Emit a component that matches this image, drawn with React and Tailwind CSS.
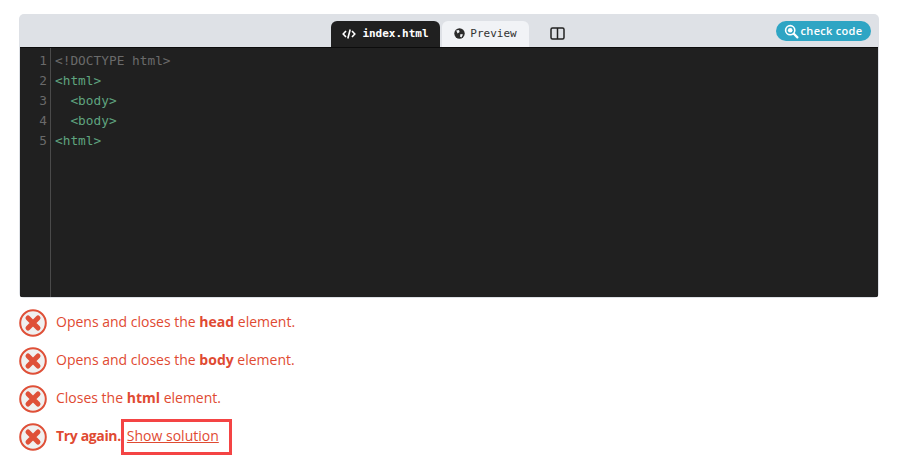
import React from 'react';

const lines = [
  { text: '<!DOCTYPE html>', color: 'text-[#6a6a6a]' },
  { text: '<html>', color: 'text-[#5fa37f]' },
  { text: '  <body>', color: 'text-[#5fa37f]' },
  { text: '  <body>', color: 'text-[#5fa37f]' },
  { text: '<html>', color: 'text-[#5fa37f]' },
];

const FailIcon = () => (
  <svg width="28" height="28" viewBox="0 0 28 28" className="shrink-0">
    <circle cx="14" cy="14" r="12.8" fill="#f0f0f0" stroke="#df5038" strokeWidth="2" />
    <path d="M9 9 L19 19 M19 9 L9 19" stroke="#df5038" strokeWidth="5" strokeLinecap="round" />
  </svg>
);

const Result = ({ children }) => (
  <div className="flex h-[28px] items-center gap-[9px] text-[14px] leading-[20px] text-[#df4a32]">
    <FailIcon />
    <div className="mb-[2px] flex items-center">{children}</div>
  </div>
);

const App = () => {
  return (
    <div className="h-[462px] w-[901px] overflow-hidden bg-white pl-[19px] pt-[14px] font-['Open_Sans',sans-serif]">
      <div className="w-[860px] overflow-hidden rounded-[5px] bg-[#dee1e6] px-[1px] pb-[1px]">
        <div className="relative flex h-[33px] items-end pl-[311px]">
          <div className="flex h-[26px] w-[109px] items-center justify-center gap-[6px] rounded-t-[6px] bg-[#202020] font-['DejaVu_Sans_Mono',monospace] text-[11px] font-bold text-white">
            <svg width="14" height="12" viewBox="0 0 14 12" fill="none" stroke="white" strokeWidth="1.6">
              <path d="M4 3 L1.2 6 L4 9 M10 3 L12.8 6 L10 9 M8.2 1.5 L5.8 10.5" />
            </svg>
            index.html
          </div>
          <div className="ml-[2px] flex h-[26px] w-[87px] items-center justify-center gap-[5px] rounded-t-[6px] bg-[#f1f3f6] font-['DejaVu_Sans_Mono',monospace] text-[11px] text-[#333]">
            <svg width="11" height="11" viewBox="0 0 11 11" className="-translate-y-[1px]">
              <circle cx="5.5" cy="5.5" r="5.2" fill="#2b2b2b" />
              <path d="M2.2 2.6 L5 2 L5.6 4 L3.6 5.4 Z M6.5 6 L9 6.5 L7.4 9.4 L6 8.6 Z" fill="#f1f3f6" />
            </svg>
            Preview
          </div>
          <div className="ml-[21px] flex h-[26px] items-center">
            <svg width="15" height="13" viewBox="0 0 15 13" fill="none" stroke="#222" strokeWidth="1.5" className="-translate-y-[1px]">
              <rect x="1" y="1" width="13" height="11" rx="1.5" />
              <path d="M7.5 1 V12" />
            </svg>
          </div>
          <div className="absolute right-[7px] top-[7px] flex h-[20px] w-[95px] items-center justify-center gap-[2px] rounded-full bg-[#2ea5c4] pr-[1px] text-[11px] font-semibold tracking-[0.3px] text-white">
            <svg width="15" height="15" viewBox="0 0 15 15" fill="none">
              <circle cx="6.2" cy="6.2" r="4.6" stroke="white" strokeWidth="1.6" />
              <circle cx="6.2" cy="6.2" r="2.3" fill="white" />
              <path d="M9.8 9.8 L13.4 13.4" stroke="white" strokeWidth="2.2" strokeLinecap="round" />
            </svg>
            check code
          </div>
        </div>
        <div className="flex h-[250px] border-t border-[#0c0c0c] bg-[#202020] font-['DejaVu_Sans_Mono',monospace] text-[12.8px] leading-[20px]">
          <div className="flex w-[31px] flex-col border-r border-[#4a4a4a] pt-[3px] pr-[3px] text-right text-[#6a6a6a]">
            {lines.map((line, i) => (
              <div key={i}>{i + 1}</div>
            ))}
          </div>
          <div className="pl-[4px] pt-[3px]">
            {lines.map((line, i) => (
              <div key={i} className={`whitespace-pre ${line.color}`}>{line.text}</div>
            ))}
          </div>
        </div>
      </div>

      <div className="mt-[11px] flex flex-col gap-[10px]">
        <Result>Opens and closes the&nbsp;<b>head</b>&nbsp;element.</Result>
        <Result>Opens and closes the&nbsp;<b>body</b>&nbsp;element.</Result>
        <Result>Closes the&nbsp;<b>html</b>&nbsp;element.</Result>
        <Result>
          <b className="tracking-[-0.35px]">Try again.</b>
          <span className="relative ml-[6px] underline">
            Show solution
            <span className="absolute left-[-6px] top-[-7px] h-[36px] w-[111px] border-[3px] border-[#f44444]" />
          </span>
        </Result>
      </div>
    </div>
  );
};

export default App;
